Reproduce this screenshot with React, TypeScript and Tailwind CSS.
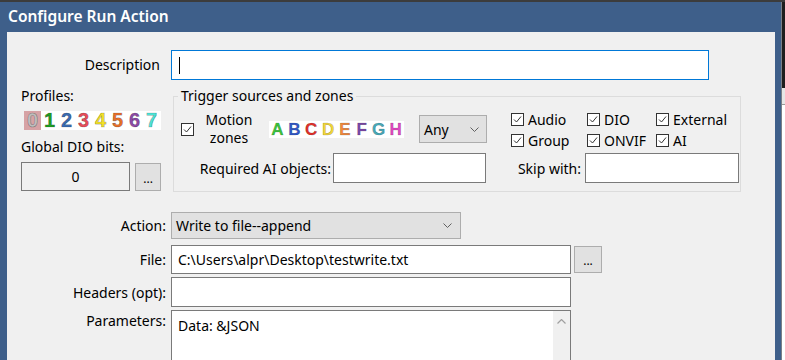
import type { ReactNode } from "react"

const digits = [
  { ch: "0", color: "#bdbdbd" },
  { ch: "1", color: "#1f9e24" },
  { ch: "2", color: "#3a6bb0" },
  { ch: "3", color: "#e84d5a" },
  { ch: "4", color: "#f3e22a" },
  { ch: "5", color: "#e8702a" },
  { ch: "6", color: "#8c4aa6" },
  { ch: "7", color: "#4de3d6" },
]

const zones = [
  { ch: "A", color: "#3cc43c" },
  { ch: "B", color: "#3058c8" },
  { ch: "C", color: "#e0302a" },
  { ch: "D", color: "#f2d63a" },
  { ch: "E", color: "#f08a3c" },
  { ch: "F", color: "#7a48a8" },
  { ch: "G", color: "#48a8b8" },
  { ch: "H", color: "#e048c0" },
]

function CheckBox() {
  return (
    <svg width="13" height="13" viewBox="0 0 13 13" className="shrink-0">
      <rect x="0.5" y="0.5" width="12" height="12" fill="#ffffff" stroke="#333333" />
      <polyline points="3,6.5 5.5,9 10,3.5" fill="none" stroke="#333333" strokeWidth="1" />
    </svg>
  )
}

function Chevron() {
  return (
    <svg width="9" height="5" viewBox="0 0 9 5" className="shrink-0">
      <polyline points="0.5,0.5 4.5,4.5 8.5,0.5" fill="none" stroke="#606060" strokeWidth="1" />
    </svg>
  )
}

function Check({ label }: { label: string }) {
  return (
    <div className="flex items-center gap-[4px] h-[18px]">
      <CheckBox />
      <span>{label}</span>
    </div>
  )
}

function Row({ label, children, className = "" }: { label: string; children: ReactNode; className?: string }) {
  return (
    <div className={"flex " + className}>
      <div className="w-[159px] text-right">{label}</div>
      <div className="ml-[5px] flex">{children}</div>
    </div>
  )
}

function DotsButton({ className = "" }: { className?: string }) {
  return (
    <div className={"flex items-end justify-center pb-[5px] bg-[#e1e1e1] border border-[#adadad] text-[12px] leading-none " + className}>
      ...
    </div>
  )
}

export default function App() {
  return (
    <div className="w-[785px] h-[360px] overflow-hidden flex flex-col bg-[#1e1e1e] font-['Noto_Sans',sans-serif] text-[14px] text-black">
      <div className="h-[2px] bg-[#3c3c3c]" />
      <div className="flex flex-1 min-h-0">
        <div className="w-[782px] flex flex-col bg-[#3e5f8a] border-r border-[#7a8088]">
          <div className="h-[30px] shrink-0 flex items-center pl-[8px] text-white text-[15.5px] font-semibold">
            Configure Run Action
          </div>
          <div className="flex-1 ml-[7px] w-[768px] bg-[#f0f0f0] flex flex-col overflow-hidden">
            {/* description */}
            <div className="flex mt-[18px]">
              <div className="w-[153px] text-right leading-[30px]">Description</div>
              <div className="ml-[11px] w-[538px] h-[30px] bg-white border border-[#0078d7] flex items-center pl-[7px]">
                <div className="w-px h-[17px] bg-black" />
              </div>
            </div>

            {/* profiles + trigger sources */}
            <div className="flex mt-[6px] pl-[14px]">
              <div className="w-[140px] flex flex-col">
                <div className="leading-[20px]">Profiles:</div>
                <div className="mt-[5px] ml-[3px] w-[137px] h-[19px] bg-white flex font-['Liberation_Sans',sans-serif] font-bold text-[20px] leading-[19px] [-webkit-text-stroke:0.6px_rgba(0,0,0,0.35)]">
                  {digits.map((d, i) => (
                    <div
                      key={d.ch}
                      className={"w-[17px] text-center " + (i === 0 ? "bg-[#d6a2a5]" : "")}
                      style={{ color: d.color }}
                    >
                      {d.ch}
                    </div>
                  ))}
                </div>
                <div className="mt-[7px] leading-[20px]">Global DIO bits:</div>
                <div className="mt-[5px] flex items-start">
                  <div className="w-[110px] h-[29px] bg-[#f0f0f0] border border-[#7a7a7a] flex items-center justify-center">0</div>
                  <DotsButton className="ml-[5px] mt-px w-[26px] h-[28px]" />
                </div>
              </div>

              <fieldset className="ml-[12px] w-[568px] border border-[#dcdcdc] pb-[8px] flex">
                <legend className="ml-[4px] px-[3px] leading-[20px]">Trigger sources and zones</legend>
                <div className="flex w-full">
                  <div className="w-[337px] flex flex-col">
                    <div className="mt-[9px] h-[28px] flex items-center">
                      <div className="ml-[7px]">
                        <CheckBox />
                      </div>
                      <div className="ml-[11px] w-[48px] text-center leading-[18px]">
                        Motion
                        <br />
                        zones
                      </div>
                      <div className="ml-[16px] w-[135px] h-[17px] bg-white flex font-['Liberation_Sans',sans-serif] font-bold text-[17px] leading-[17px] [-webkit-text-stroke:0.5px_rgba(0,0,0,0.3)]">
                        {zones.map((z) => (
                          <div key={z.ch} className="w-[17px] text-center" style={{ color: z.color }}>
                            {z.ch}
                          </div>
                        ))}
                      </div>
                      <div className="ml-[15px] w-[68px] h-[28px] bg-[#e1e1e1] border border-[#adadad] flex items-center justify-between pl-[4px] pr-[7px]">
                        <span>Any</span>
                        <Chevron />
                      </div>
                    </div>
                    <div className="mt-[10px] h-[30px] flex items-center">
                      <div className="w-[157px] text-right whitespace-nowrap">Required AI objects:</div>
                      <div className="ml-[2px] w-[153px] h-[30px] bg-white border border-[#7a7a7a]" />
                    </div>
                  </div>
                  <div className="w-[229px] flex flex-col">
                    <div className="mt-[4px] grid grid-cols-[76px_69px_1fr]">
                      <Check label="Audio" />
                      <Check label="DIO" />
                      <Check label="External" />
                    </div>
                    <div className="mt-[3px] grid grid-cols-[76px_69px_1fr]">
                      <Check label="Group" />
                      <Check label="ONVIF" />
                      <Check label="AI" />
                    </div>
                    <div className="mt-[4px] h-[30px] flex items-center">
                      <div className="w-[70px] text-right whitespace-nowrap">Skip with:</div>
                      <div className="ml-[4px] w-[154px] h-[30px] bg-white border border-[#7a7a7a]" />
                    </div>
                  </div>
                </div>
              </fieldset>
            </div>

            {/* action fields */}
            <Row label="Action:" className="mt-[20px] items-center">
              <div className="w-[290px] h-[27px] bg-[#e1e1e1] border border-[#adadad] flex items-center justify-between pl-[4px] pr-[8px]">
                <span>Write to file--append</span>
                <Chevron />
              </div>
            </Row>
            <Row label="File:" className="mt-[6px] items-center">
              <div className="w-[400px] h-[29px] bg-white border border-[#7a7a7a] flex items-center pl-[6px]">
                C:\Users\alpr\Desktop\testwrite.txt
              </div>
              <DotsButton className="ml-[3px] w-[28px] h-[27px] self-center" />
            </Row>
            <Row label="Headers (opt):" className="mt-[3px] items-center">
              <div className="w-[400px] h-[30px] bg-white border border-[#7a7a7a]" />
            </Row>
            <Row label="Parameters:" className="mt-[3px] items-start">
              <div className="w-[400px] h-[70px] bg-white border border-[#7a7a7a] flex">
                <div className="flex-1 pl-[6px] pt-[4px]">Data: &amp;JSON</div>
                <div className="w-[17px] bg-[#f0f0f0] flex justify-center pt-[8px]">
                  <svg width="9" height="5" viewBox="0 0 9 5">
                    <polyline points="0.5,4.5 4.5,0.5 8.5,4.5" fill="none" stroke="#a0a0a0" strokeWidth="1.2" />
                  </svg>
                </div>
              </div>
            </Row>
          </div>
        </div>
        <div className="flex-1 flex flex-col">
          <div className="h-[86px] bg-[#1e1e1e]" />
          <div className="h-[17px] bg-[#e6e6e6] border-b border-[#999999]" />
          <div className="flex-1 bg-white" />
        </div>
      </div>
    </div>
  )
}
